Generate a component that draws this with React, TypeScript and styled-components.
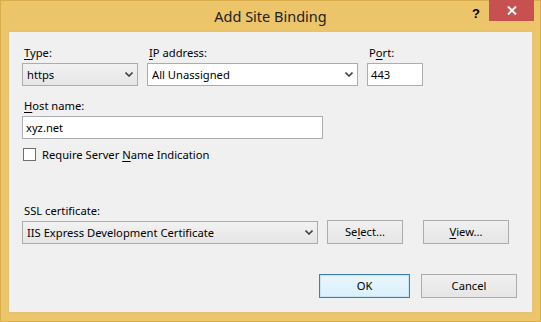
import styled, { createGlobalStyle } from "styled-components";

const Global = createGlobalStyle`
  html, body { margin: 0; padding: 0; }
  body { font-family: "Noto Sans", "Open Sans", sans-serif; font-size: 11.2px; line-height: 16px; color: #000; }
`;

const Frame = styled.div`
  width: 541px;
  height: 322px;
  box-sizing: border-box;
  background: #ecc56a;
  border: 1px solid #d9ac4c;
  display: flex;
  flex-direction: column;
`;

const TitleBar = styled.div`
  height: 30px;
  display: flex;
  align-items: flex-start;
  position: relative;
`;

const Title = styled.div`
  flex: 1;
  text-align: center;
  font-size: 14.5px;
  line-height: 30px;
  color: #222;
`;

const Help = styled.div`
  position: absolute;
  left: 471px;
  top: 5px;
  font-weight: 700;
  font-size: 13px;
  line-height: 16px;
  font-family: "Liberation Sans", sans-serif;
`;

const Close = styled.div`
  position: absolute;
  right: 6px;
  top: -1px;
  width: 45px;
  height: 21px;
  background: #c75050;
  display: flex;
  align-items: center;
  justify-content: center;
`;

const Client = styled.div`
  flex: 1;
  margin: 0 7px 8px 7px;
  background: #f0f0f0;
  border: 1px solid #e3c277;
  padding: 13px 14px 0 13px;
  display: flex;
  flex-direction: column;
`;

const Row = styled.div<{ $gap?: number; $top?: number }>`
  display: flex;
  align-items: flex-end;
  gap: ${(p) => p.$gap ?? 9}px;
  margin-top: ${(p) => p.$top ?? 0}px;
`;

const Field = styled.div`
  display: flex;
  flex-direction: column;
`;

const Label = styled.div`
  height: 16px;
  line-height: 16px;
  margin: 0 0 2px 2px;
`;

const Key = styled.span`
  text-decoration: underline;
  text-underline-offset: 2px;
`;

const TextBox = styled.div<{ $w: number }>`
  width: ${(p) => p.$w}px;
  height: 23px;
  box-sizing: border-box;
  background: #fff;
  border: 1px solid #abadb3;
  padding-left: 3px;
  line-height: 21px;
`;

const Combo = styled.div<{ $w: number; $white?: boolean }>`
  width: ${(p) => p.$w}px;
  height: 23px;
  box-sizing: border-box;
  background: ${(p) => (p.$white ? "#fff" : "linear-gradient(#f2f2f2, #e5e5e5)")};
  border: 1px solid #acacac;
  padding: 0 4px 0 4px;
  display: flex;
  align-items: center;
  justify-content: space-between;
`;

const Chevron = () => (
  <svg width="8" height="5" viewBox="0 0 8 5">
    <path d="M0.5 0.5 L4 4 L7.5 0.5" fill="none" stroke="#444" strokeWidth="1.6" />
  </svg>
);

const CheckRow = styled.label`
  display: flex;
  align-items: center;
  gap: 6px;
  height: 13px;
  margin-top: 9px;
  margin-left: 1px;
`;

const Check = styled.span`
  width: 13px;
  height: 13px;
  box-sizing: border-box;
  background: #fff;
  border: 1px solid #707070;
`;

const Button = styled.div<{ $w: number; $default?: boolean }>`
  width: ${(p) => p.$w}px;
  height: 24px;
  box-sizing: border-box;
  border: 1px solid ${(p) => (p.$default ? "#3c7fb1" : "#acacac")};
  background: ${(p) =>
    p.$default ? "linear-gradient(#eaf6fd, #d9f0fc)" : "linear-gradient(#f0f0f0, #e5e5e5)"};
  box-shadow: ${(p) => (p.$default ? "inset 0 0 0 1px #c5e4f7" : "none")};
  display: flex;
  align-items: center;
  justify-content: center;
`;

const Footer = styled.div`
  display: flex;
  justify-content: flex-end;
  gap: 11px;
  margin-top: 30px;
  margin-right: 1px;
`;

export default function App() {
  return (
    <>
      <Global />
      <Frame>
        <TitleBar>
          <Title>Add Site Binding</Title>
          <Help>?</Help>
          <Close>
            <svg width="10" height="9" viewBox="0 0 10 9">
              <path d="M1 0.5 L9 8.5 M9 0.5 L1 8.5" stroke="#fff" strokeWidth="2" />
            </svg>
          </Close>
        </TitleBar>
        <Client>
          <Row>
            <Field>
              <Label>
                <Key>T</Key>ype:
              </Label>
              <Combo $w={116}>
                https
                <Chevron />
              </Combo>
            </Field>
            <Field>
              <Label>
                <Key>I</Key>P address:
              </Label>
              <Combo $w={211} $white>
                All Unassigned
                <Chevron />
              </Combo>
            </Field>
            <Field>
              <Label>
                P<Key>o</Key>rt:
              </Label>
              <TextBox $w={56}>443</TextBox>
            </Field>
          </Row>
          <Row $top={12}>
            <Field>
              <Label>
                <Key>H</Key>ost name:
              </Label>
              <TextBox $w={301}>xyz.net</TextBox>
            </Field>
          </Row>
          <CheckRow>
            <Check />
            <span>
              Require Server <Key>N</Key>ame Indication
            </span>
          </CheckRow>
          <Row $top={42} $gap={9}>
            <Field>
              <Label>
                SSL certif<Key>i</Key>cate:
              </Label>
              <Combo $w={296}>
                IIS Express Development Certificate
                <Chevron />
              </Combo>
            </Field>
            <Button $w={76}>
              Se<Key>l</Key>ect...
            </Button>
            <Button $w={86} style={{ marginLeft: 11 }}>
              <Key>V</Key>iew...
            </Button>
          </Row>
          <Footer>
            <Button $w={91} $default>
              OK
            </Button>
            <Button $w={96}>Cancel</Button>
          </Footer>
        </Client>
      </Frame>
    </>
  );
}
